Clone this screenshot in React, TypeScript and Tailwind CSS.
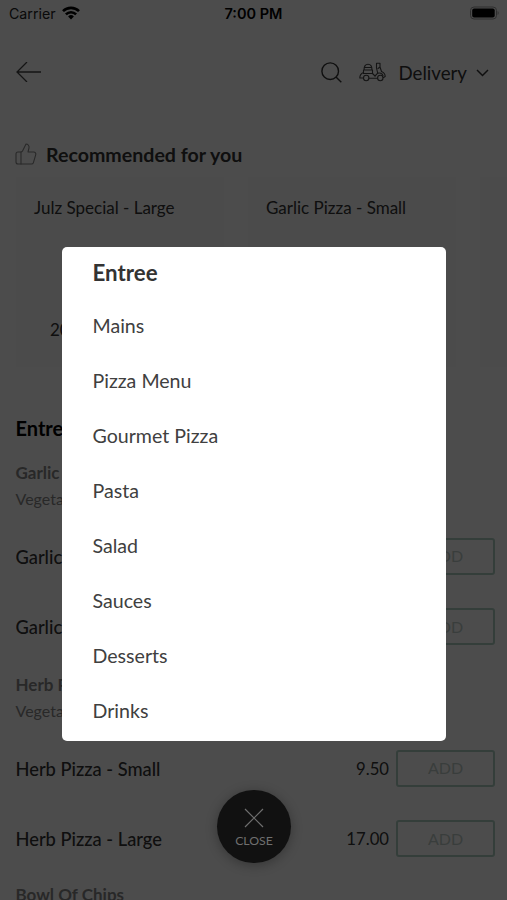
import { ThumbsUp } from 'lucide-react';

const categories = [
  'Entree',
  'Mains',
  'Pizza Menu',
  'Gourmet Pizza',
  'Pasta',
  'Salad',
  'Sauces',
  'Desserts',
  'Drinks',
];

const recommended = [
  { name: 'Julz Special - Large', price: '20.00' },
  { name: 'Garlic Pizza - Small', price: '9.50' },
];

const menuGroups = [
  {
    name: 'Garlic Pizza',
    tag: 'Vegetarian',
    items: [
      { name: 'Garlic Pizza - Small', price: '9.50' },
      { name: 'Garlic Pizza - Large', price: '17.00' },
    ],
  },
  {
    name: 'Herb Pizza',
    tag: 'Vegetarian',
    items: [
      { name: 'Herb Pizza - Small', price: '9.50' },
      { name: 'Herb Pizza - Large', price: '17.00' },
    ],
  },
];

function ScooterIcon() {
  return (
    <svg
      viewBox="0 0 27 20"
      className="h-5 w-[27px]"
      fill="none"
      stroke="#444444"
      strokeWidth="1.1"
      strokeLinejoin="round"
      strokeLinecap="round"
    >
      <path d="M5 8C5 4 6.500 2.300 9 2.300S13 4 13 8M5.500 5.500h7M4.500 8h9v3.500h-9z" />
      <path d="M4.500 10.500C2 11.500.8 13.500.8 16h3.400M4.500 11.500h9l2.500 2.500" />
      <path d="M10 16.200h8.300M16 14l2.700-2.800L17.500 6V1.200H21V5l-2 1.500M21 5l1.500 4.500c2.300 1 3.700 2.700 3.700 5l-1.700 1" />
      <path d="M18.700 11.200c2-.7 4.500.3 5.300 2.300" />
      <circle cx="7.200" cy="16" r="2.700" />
      <circle cx="21.300" cy="16" r="2.700" />
    </svg>
  );
}

function StatusBar() {
  return (
    <div className="grid h-[26px] shrink-0 grid-cols-3 items-center px-2 font-['Inter',sans-serif] text-[14px] text-black">
      <div className="flex items-center gap-1.5 pl-px">
        <span className="pt-0.5 text-[14.2px] text-[#222222]">Carrier</span>
        <svg viewBox="0 0 18 14" className="h-3.5 w-[18px]" fill="none" stroke="black" strokeWidth="2.6">
          <path d="M1 5.200a11.300 11.300 0 0 1 16 0M3.900 8.300a7.200 7.200 0 0 1 10.200 0" />
          <path d="M9 13.500l2.900-3a4.100 4.100 0 0 0-5.800 0z" fill="black" stroke="none" />
        </svg>
      </div>
      <span className="pt-0.5 text-center text-[14.500px] font-semibold">7:00 PM</span>
      <svg viewBox="0 0 30 14" className="h-3.5 w-[30px] justify-self-end">
        <rect x="1.500" y="1" width="26" height="12" rx="3.500" fill="none" stroke="#9a9a9a" strokeWidth="1" />
        <rect x="3.200" y="2.500" width="22.500" height="9" rx="2" fill="black" />
        <path d="M28.600 5v4c1.400-.7 1.400-3.300 0-4z" fill="#9a9a9a" />
      </svg>
    </div>
  );
}

function AddButton() {
  return (
    <button className="ml-[7px] h-[37px] w-[99px] rounded-[3px] border-2 border-[#aed0c3] text-[16px] text-[#c0cec8]">
      ADD
    </button>
  );
}

export default function App() {
  return (
    <div className="relative flex h-[900px] w-[507px] flex-col overflow-hidden bg-white font-['Lato',sans-serif] text-[#333333]">
      <StatusBar />

      <header className="flex h-[92px] shrink-0 items-center pr-[18px] pl-4">
        <svg viewBox="0 0 25 20" className="h-5 w-[25px]" fill="none" stroke="#444444" strokeWidth="1.300">
          <path d="M25 10H1M11 0L1 10l10 10" />
        </svg>
        <svg viewBox="0 0 21 21" className="ml-auto h-[21px] w-[21px]" fill="none" stroke="#333333" strokeWidth="1.4">
          <circle cx="9.200" cy="9.200" r="8.300" />
          <path d="M15 15l5.300 5.300" />
        </svg>
        <div className="ml-[17px]">
          <ScooterIcon />
        </div>
        <span className="ml-3 pt-px text-[18.700px] leading-6">Delivery</span>
        <svg viewBox="0 0 13 8" className="mt-0.5 ml-[9px] h-2 w-[13px]" fill="none" stroke="#333333" strokeWidth="1.500">
          <path d="M1 1l5.500 5.500L12 1" />
        </svg>
      </header>

      <section className="flex h-[249px] shrink-0 flex-col pt-[21px] pl-4">
        <h2 className="flex h-[30px] items-center gap-2 text-[19.600px] font-bold">
          <ThumbsUp className="-ml-0.5 h-6 w-6 text-[#888888]" strokeWidth={1.1} />
          <span className="pt-px">Recommended for you</span>
        </h2>
        <div className="mt-2 flex gap-6 overflow-hidden">
          {recommended.map((item) => (
            <div
              key={item.name}
              className="flex h-[191px] w-[208px] shrink-0 flex-col justify-between bg-[#fafafa] px-[18px] pt-[18px] pb-[26px] text-[17px]"
            >
              <span>{item.name}</span>
              <span className="pl-4">{item.price}</span>
            </div>
          ))}
          <div className="h-[191px] w-[208px] shrink-0 bg-[#fafafa]" />
        </div>
      </section>

      <section className="shrink-0 pr-3 pl-[15.500px]">
        <h2 className="mt-[46px] h-[30px] text-xl leading-[30px] font-bold text-black">Entree</h2>
        {menuGroups.map((group) => (
          <div key={group.name} className="h-[212px] pt-[17px]">
            <h3 className="h-[26px] text-[17px] leading-[26px] font-bold text-[#888888]">{group.name}</h3>
            <p className="h-[26px] text-[16px] leading-[26px] text-[#888888]">{group.tag}</p>
            {group.items.map((item) => (
              <div key={item.name} className="flex h-[70.5px] items-center pt-[18px] text-[18.300px]">
                <span className="flex-1 truncate pt-0.5 font-medium">{item.name}</span>
                <span className="pt-0.5 text-[16.700px]">{item.price}</span>
                <AddButton />
              </div>
            ))}
          </div>
        ))}
        <h3 className="h-[26px] pt-[15px] text-[17px] leading-[26px] font-bold text-[#888888]">Bowl Of Chips</h3>
      </section>

      <div className="absolute inset-0 bg-black/70" />

      <nav className="absolute top-[247px] left-[62px] flex h-[494px] w-[384px] flex-col rounded-[5px] bg-white px-[30.500px]">
        {categories.map((category, index) => (
          <button
            key={category}
            className={
              index === 0
                ? 'h-[52px] text-left text-[22.300px] font-bold'
                : 'h-[55px] pb-px text-left text-[19.600px] text-[#404040]'
            }
          >
            {category}
          </button>
        ))}
      </nav>

      <button className="absolute top-[790px] left-[217px] flex h-[73px] w-[74px] flex-col items-center rounded-full bg-[#111111] pt-[18px] text-[#6f6f6f] shadow-[0_2px_12px_rgba(0,0,0,0.300)]">
        <svg viewBox="0 0 20 20" className="h-5 w-5" fill="none" stroke="currentColor" strokeWidth="1.200">
          <path d="M1 1l18 18M19 1L1 19" />
        </svg>
        <span className="mt-1 text-[12.300px] leading-[18px]">CLOSE</span>
      </button>
    </div>
  );
}
